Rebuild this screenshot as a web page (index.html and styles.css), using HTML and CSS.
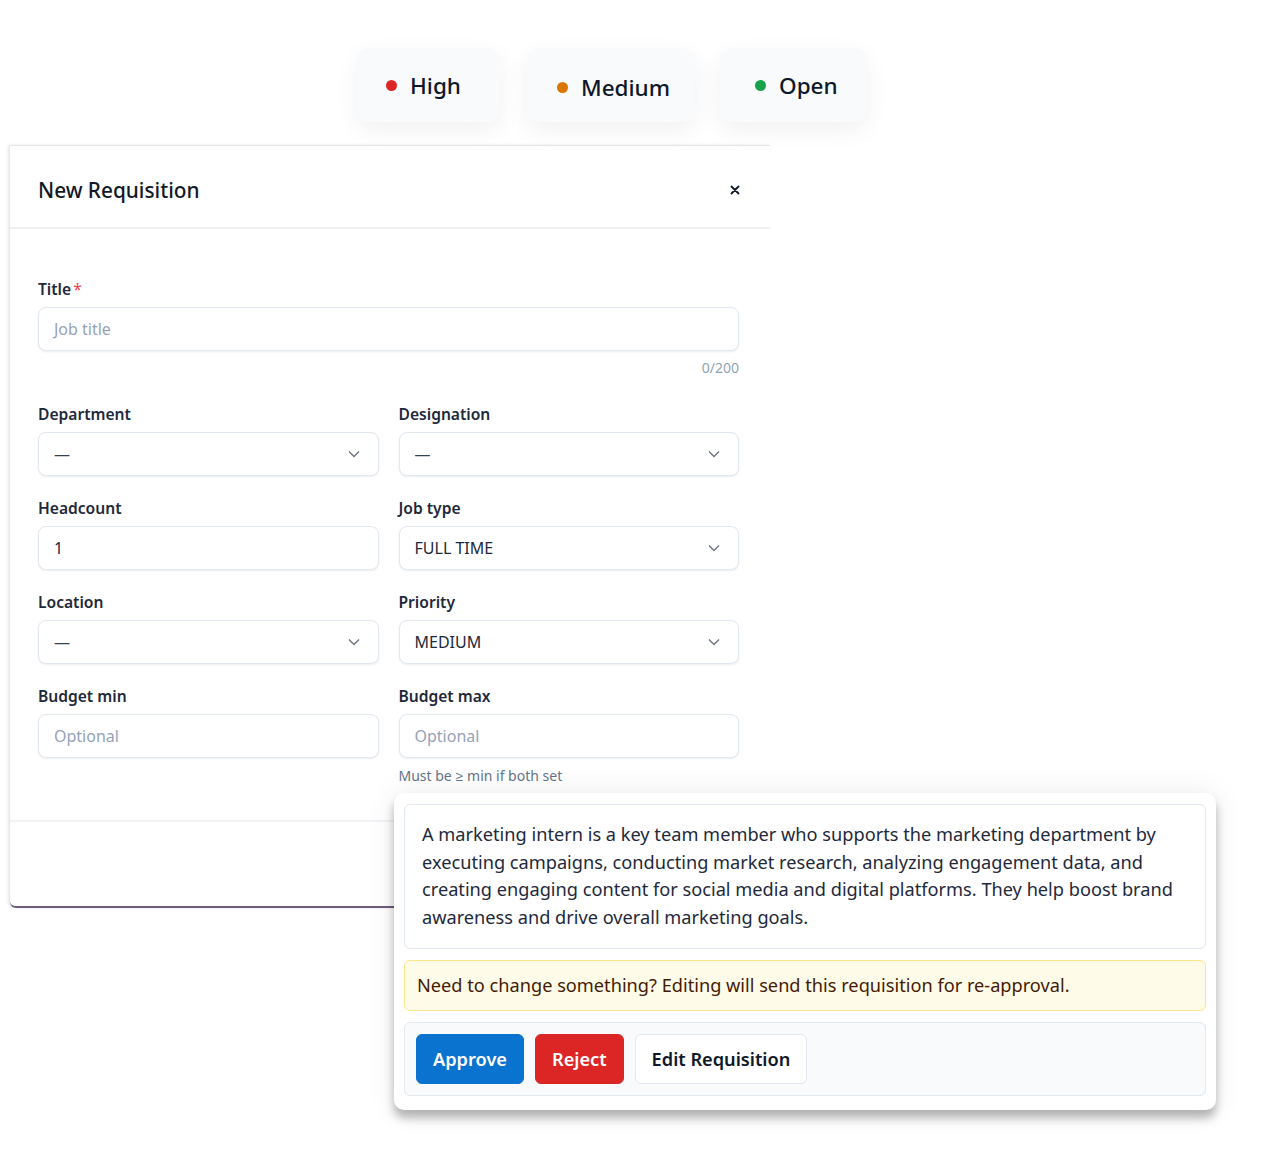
FILE: index.html
```html
<!DOCTYPE html>
<html>
<head>
  <title>Requisition Review</title>
  <link rel="stylesheet" href="styles.css">
</head>
<body>
  <div class="scene">
    <div class="badges">
      <div class="badge badge-high"><span class="dot dot-red"></span>High</div>
      <div class="badge badge-medium"><span class="dot dot-orange"></span>Medium</div>
      <div class="badge badge-open"><span class="dot dot-green"></span>Open</div>
    </div>

    <div class="modal">
      <div class="modal-header">
        <h2>New Requisition</h2>
        <button class="close" aria-label="Close">
          <svg width="10" height="10" viewBox="0 0 10 10"><path d="M1.5 1.5l7 7M8.5 1.5l-7 7" stroke="#111827" stroke-width="1.8" stroke-linecap="round"/></svg>
        </button>
      </div>

      <div class="modal-body">
        <div class="field">
          <label>Title<span class="req">*</span></label>
          <div class="control placeholder">Job title</div>
          <div class="counter">0/200</div>
        </div>

        <div class="grid">
          <div class="field">
            <label>Department</label>
            <div class="control select"><span class="dash">—</span><svg class="chev" width="12" height="8" viewBox="0 0 12 8"><path d="M1 1.5l5 5 5-5" fill="none" stroke="#6b7280" stroke-width="1.3"/></svg></div>
          </div>
          <div class="field">
            <label>Designation</label>
            <div class="control select"><span class="dash">—</span><svg class="chev" width="12" height="8" viewBox="0 0 12 8"><path d="M1 1.5l5 5 5-5" fill="none" stroke="#6b7280" stroke-width="1.3"/></svg></div>
          </div>
          <div class="field">
            <label>Headcount</label>
            <div class="control">1</div>
          </div>
          <div class="field">
            <label>Job type</label>
            <div class="control select"><span>FULL TIME</span><svg class="chev" width="12" height="8" viewBox="0 0 12 8"><path d="M1 1.5l5 5 5-5" fill="none" stroke="#6b7280" stroke-width="1.3"/></svg></div>
          </div>
          <div class="field">
            <label>Location</label>
            <div class="control select"><span class="dash">—</span><svg class="chev" width="12" height="8" viewBox="0 0 12 8"><path d="M1 1.5l5 5 5-5" fill="none" stroke="#6b7280" stroke-width="1.3"/></svg></div>
          </div>
          <div class="field">
            <label>Priority</label>
            <div class="control select"><span>MEDIUM</span><svg class="chev" width="12" height="8" viewBox="0 0 12 8"><path d="M1 1.5l5 5 5-5" fill="none" stroke="#6b7280" stroke-width="1.3"/></svg></div>
          </div>
          <div class="field">
            <label>Budget min</label>
            <div class="control placeholder">Optional</div>
          </div>
          <div class="field">
            <label>Budget max</label>
            <div class="control placeholder">Optional</div>
            <div class="hint">Must be ≥ min if both set</div>
          </div>
        </div>
      </div>

      <div class="modal-footer"></div>
    </div>

    <div class="review-card">
      <div class="description">
        A marketing intern is a key team member who supports the marketing department by
        executing campaigns, conducting market research, analyzing engagement data, and
        creating engaging content for social media and digital platforms. They help boost brand
        awareness and drive overall marketing goals.
      </div>
      <div class="notice">Need to change something? Editing will send this requisition for re-approval.</div>
      <div class="actions">
        <button class="btn btn-approve">Approve</button>
        <button class="btn btn-reject">Reject</button>
        <button class="btn btn-edit">Edit Requisition</button>
      </div>
    </div>
  </div>
</body>
</html>
```

FILE: styles.css
```css
body {
  margin: 0;
  padding: 0;
  background: #fff;
  font-family: "Noto Sans", "Open Sans", sans-serif;
  color: #0f172a;
}

.scene {
  position: relative;
  width: 1269px;
  height: 1168px;
  overflow: hidden;
}

/* status badges */
.badges {
  display: flex;
  padding: 48px 0 0 357px;
}

.badge {
  display: flex;
  align-items: center;
  gap: 13px;
  height: 74px;
  box-sizing: border-box;
  background: #f8fafc;
  border-radius: 12px;
  box-shadow: 0 8px 24px rgba(15, 23, 42, 0.06);
  font-size: 22.5px;
  font-weight: 500;
  color: #0f172a;
}

.badge-high {
  width: 143px;
  padding-left: 29px;
}

.badge-medium {
  width: 168px;
  margin-left: 27px;
  padding: 5px 0 0 30px;
}

.badge-open {
  width: 147px;
  margin-left: 25px;
  padding-left: 35px;
}

.dot {
  width: 11px;
  height: 11px;
  border-radius: 50%;
}

.dot-red { background: #dc2626; }
.dot-orange { background: #d97706; }
.dot-green { background: #16a34a; }

/* modal */
.modal {
  width: 760px;
  margin: 23px 0 0 10px;
  background: #fff;
  border-top: 1px solid #e5e7eb;
  border-bottom: 2px solid #6d5d78;
  border-radius: 0 0 4px 6px;
  box-shadow: -2px 0 3px rgba(0, 0, 0, 0.1);
}

.modal-header {
  display: flex;
  align-items: center;
  justify-content: space-between;
  height: 83px;
  box-sizing: border-box;
  padding: 7px 29px 0 28px;
  border-bottom: 2px solid #f1f1f1;
}

.modal-header h2 {
  margin: 0;
  font-size: 20.8px;
  font-weight: 500;
  color: #111827;
}

.close {
  border: none;
  background: transparent;
  padding: 0;
  width: 12px;
  height: 12px;
  display: flex;
  align-items: center;
  justify-content: center;
  cursor: pointer;
}

.modal-body {
  padding: 49px 31px 34px 28px;
  border-bottom: 2px solid #f1f3f6;
}

.field label {
  display: block;
  font-size: 15.6px;
  font-weight: 600;
  line-height: 22px;
  color: #1e293b;
  margin-bottom: 7px;
}

.req {
  color: #ef4444;
  font-weight: 400;
  margin-left: 2px;
}

.control {
  display: flex;
  align-items: center;
  justify-content: space-between;
  height: 44px;
  box-sizing: border-box;
  padding: 0 18px 0 15px;
  border: 1px solid #e2e8f0;
  border-radius: 8px;
  background: #fff;
  box-shadow: 0 1px 2px rgba(15, 23, 42, 0.08);
  font-size: 16px;
  color: #1e293b;
}

.control.placeholder {
  color: #94a3b8;
}

.dash {
  color: #334155;
}

.counter {
  text-align: right;
  font-size: 14px;
  line-height: 20px;
  color: #94a3b8;
  margin-top: 7px;
}

.grid {
  display: grid;
  grid-template-columns: 1fr 1fr;
  column-gap: 20px;
  row-gap: 21px;
  margin-top: 25px;
}

.hint {
  font-size: 14px;
  line-height: 20px;
  color: #64748b;
  margin-top: 8px;
}

.modal-footer {
  height: 84px;
}

/* review card floating over the modal */
.review-card {
  position: absolute;
  left: 394px;
  top: 793px;
  width: 822px;
  box-sizing: border-box;
  padding: 11px 10px 14px;
  display: flex;
  flex-direction: column;
  gap: 11px;
  background: #fff;
  border-radius: 10px;
  box-shadow: 0 8px 10px rgba(0, 0, 0, 0.28), 0 0 30px rgba(0, 0, 0, 0.08);
}

.description {
  padding: 16px 17px 17px;
  border: 1px solid #e2e8f0;
  border-radius: 6px;
  font-size: 18.2px;
  line-height: 27.5px;
  color: #1e293b;
}

.notice {
  padding: 12px 12px;
  background: #fefce8;
  border: 1px solid #fde68a;
  border-radius: 6px;
  font-size: 18.2px;
  line-height: 25px;
  color: #451a03;
}

.actions {
  display: flex;
  gap: 11px;
  padding: 11px 11px;
  background: #f8fafc;
  border: 1px solid #e2e8f0;
  border-radius: 6px;
}

.btn {
  height: 50px;
  padding: 0 16px;
  border-radius: 6px;
  font-family: inherit;
  font-size: 18.2px;
  font-weight: 600;
  cursor: pointer;
}

.btn-approve {
  background: #0a72cf;
  border: 1px solid #0a72cf;
  color: #fff;
}

.btn-reject {
  background: #dc2626;
  border: 1px solid #dc2626;
  color: #fff;
}

.btn-edit {
  background: #fff;
  border: 1px solid #e2e8f0;
  color: #0f172a;
}
```
